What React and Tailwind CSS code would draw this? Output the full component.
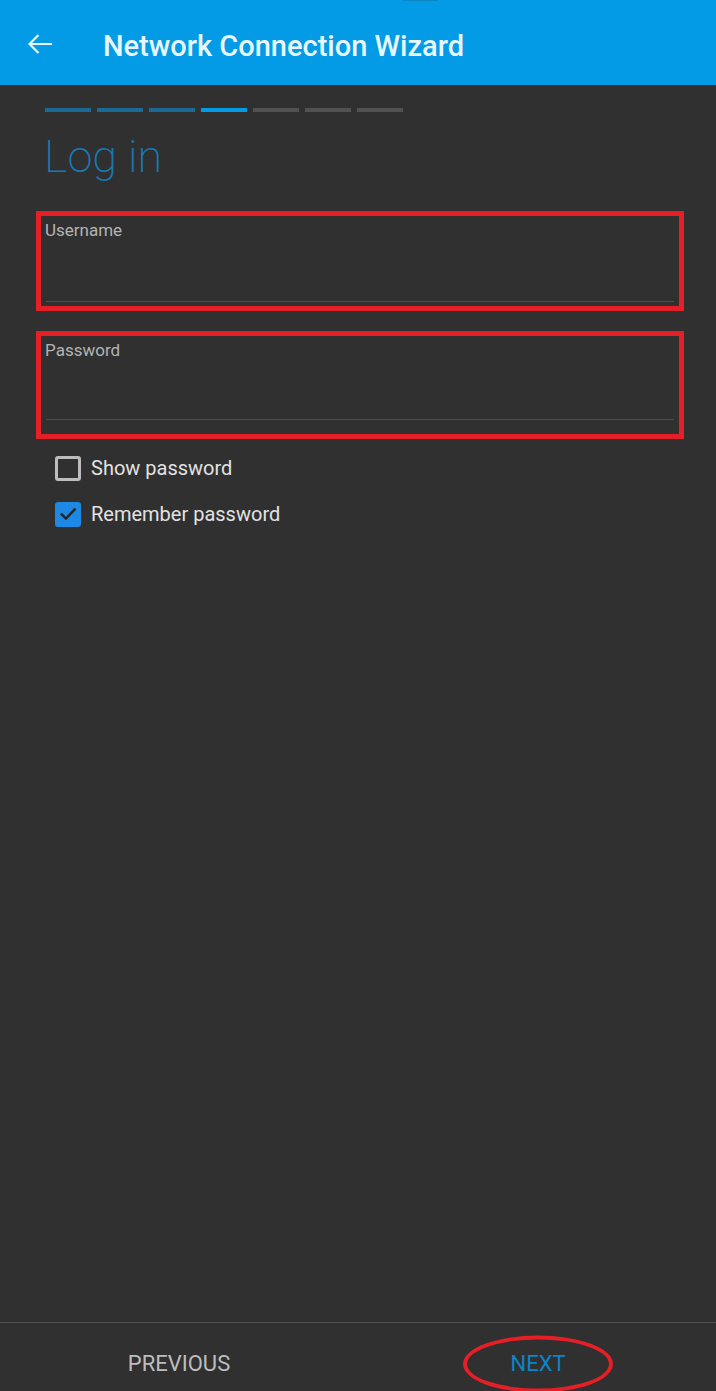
import { useState } from "react"

const STEPS = ["done", "done", "done", "current", "todo", "todo", "todo"]

function StepBar() {
    return (
        <div className="flex gap-[6px] ml-[45px] mt-[23px]">
            {STEPS.map((s, i) => (
                <div
                    key={i}
                    className={
                        "w-[46px] h-[4px] " +
                        (s === "done" ? "bg-[#1a6a94]" : s === "current" ? "bg-[#039be5]" : "bg-[#525252]")
                    }
                />
            ))}
        </div>
    )
}

function Field({ label, className }) {
    return (
        <div className={"ml-[36px] w-[648px] border-[5px] border-[#e61e26] px-[4px] pt-[6px] flex flex-col " + className}>
            <p className="text-[17px] leading-[17px] text-[#b4b4b4]">{label}</p>
            <div className="mt-auto mx-px h-px bg-[#4e4e4e]" />
        </div>
    )
}

function CheckRow({ label, checked, onToggle }) {
    return (
        <div className="flex items-center h-[46px] ml-[55px] cursor-pointer" onClick={onToggle}>
            {checked ? (
                <div className="w-[26px] h-[25px] rounded-[3px] bg-[#1e88e5] flex items-center justify-center">
                    <svg width="20" height="20" viewBox="0 0 24 24" fill="none" stroke="#262626" strokeWidth="3" strokeLinecap="square">
                        <path d="M4.5 12.5l5 5L20 6.5" />
                    </svg>
                </div>
            ) : (
                <div className="w-[26px] h-[25px] rounded-[3px] border-[3px] border-[#bdbdbd]" />
            )}
            <span className="ml-[10px] text-[20px] text-[#e2e2e2]">{label}</span>
        </div>
    )
}

export default function App() {
    const [showPass, SetShowPass] = useState(false)
    const [remember, SetRemember] = useState(true)

    return (
        <div className="h-screen flex flex-col bg-[#303030] font-['Roboto',sans-serif] relative">
            {/* notch sliver */}
            <div className="absolute top-0 left-[403px] w-[35px] h-[1px] bg-[#0d86c4]" />

            <header className="h-[85px] bg-[#039be5] flex items-center shrink-0">
                <svg className="ml-[28px] mt-[2px]" width="24" height="20" viewBox="0 0 24 20" fill="none" stroke="#e8f6fd" strokeWidth="2.2">
                    <path d="M1.5 10H24M10.5 1L1.5 10l9 9" />
                </svg>
                <h1 className="ml-[51px] mt-[7px] text-[29px] font-medium text-[#e8f6fd] leading-none">Network Connection Wizard</h1>
            </header>

            <main className="flex-1 flex flex-col">
                <StepBar />
                <h2 className="ml-[44px] mt-[21px] text-[45px] leading-[48px] font-extralight text-[#1a78b0]">Log in</h2>

                <Field label="Username" className="mt-[30px] h-[100px] pb-[4px]" />
                <Field label="Password" className="mt-[20px] h-[108px] pb-[14px]" />

                <div className="mt-[6px]">
                    <CheckRow label="Show password" checked={showPass} onToggle={() => SetShowPass(!showPass)} />
                    <CheckRow label="Remember password" checked={remember} onToggle={() => SetRemember(!remember)} />
                </div>
            </main>

            <footer className="h-[69px] shrink-0 border-t border-[#4f4f4f] grid grid-cols-2">
                <button className="flex items-center justify-center pt-[13px] text-[22px] text-[#bdbdbd]">PREVIOUS</button>
                <div className="flex items-center justify-center pt-[13px]">
                    <button className="relative text-[22px] text-[#0b84c9] ml-[2px]">
                        NEXT
                        <span className="absolute left-1/2 top-1/2 -translate-x-1/2 -translate-y-1/2 w-[150px] h-[57px] rounded-[50%] border-[4px] border-[#e61e26]" />
                    </button>
                </div>
            </footer>
        </div>
    )
}
